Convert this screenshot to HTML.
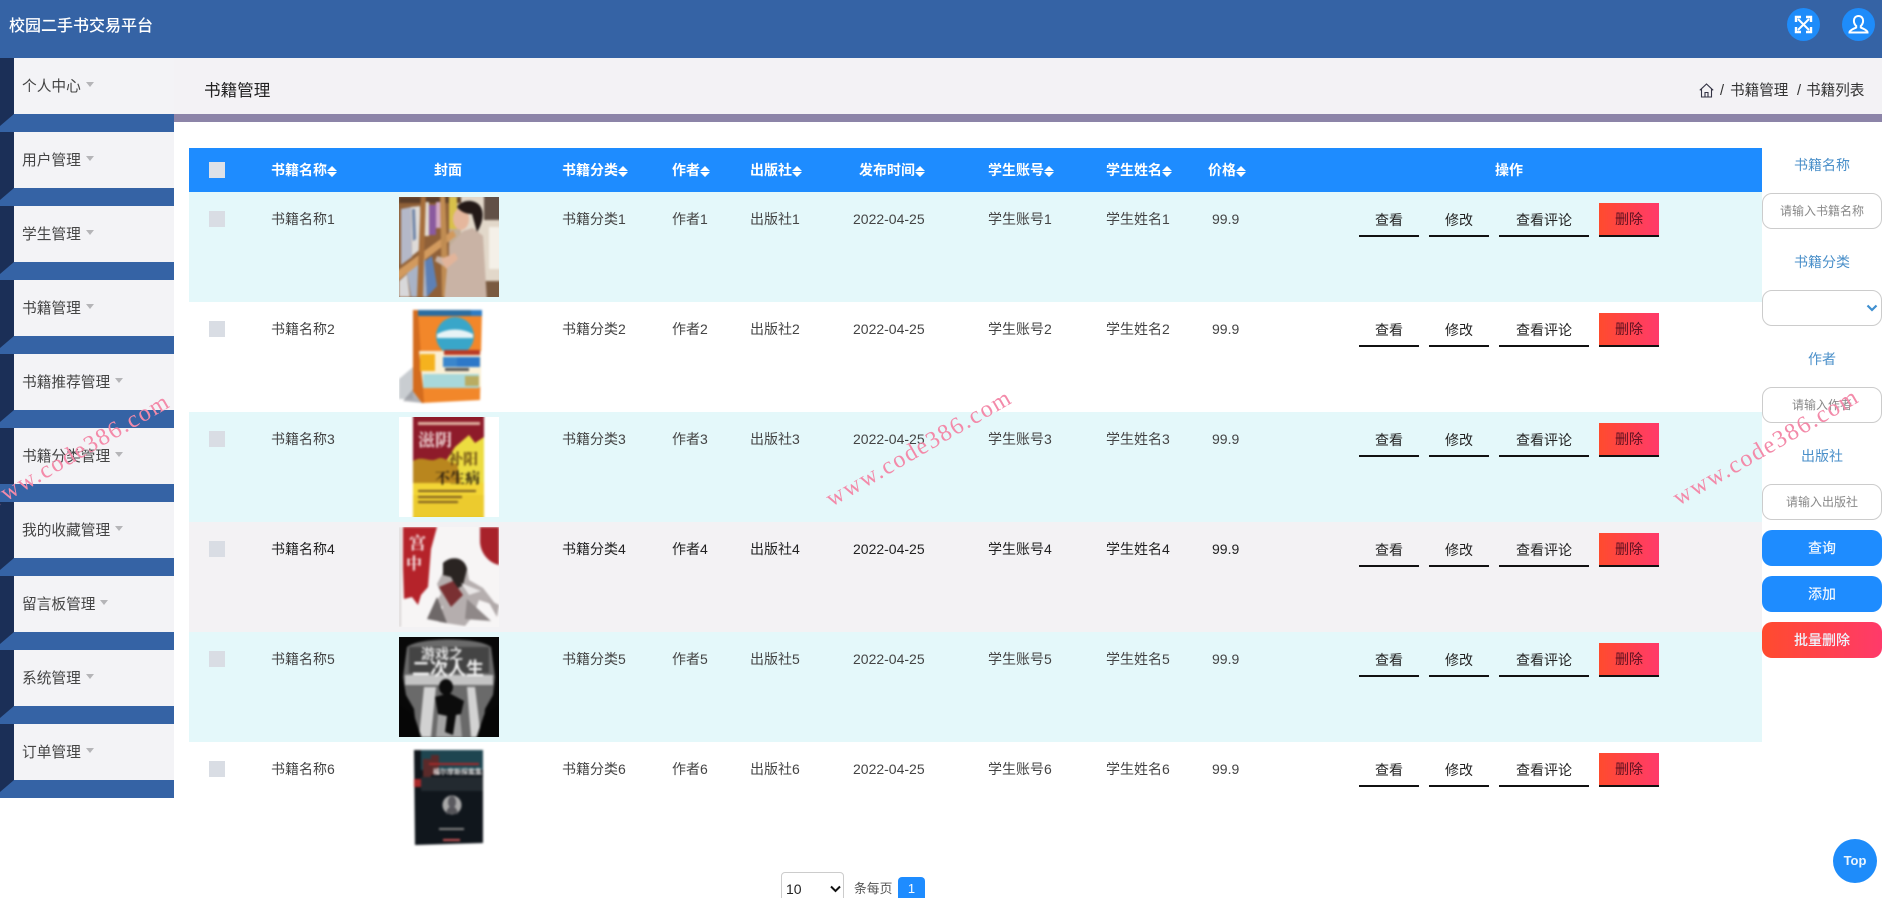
<!DOCTYPE html>
<html lang="zh">
<head>
<meta charset="utf-8">
<title>校园二手书交易平台</title>
<style>
*{box-sizing:border-box;margin:0;padding:0}
html,body{width:1882px;height:898px;overflow:hidden;background:#fff}
body{position:relative;font-family:"Liberation Sans","Noto Sans CJK SC",sans-serif;font-size:14px;color:#333}
.a{position:absolute;white-space:nowrap}
.hd{left:0;top:0;width:1882px;height:58px;background:#3563a5}
.ttl{left:9px;top:14px;font-size:16px;line-height:26px;color:#fff;font-weight:500}
.circ{width:33px;height:33px;border-radius:50%;background:#1e8cfa;top:8px}
.circ svg{position:absolute;left:0;top:0}
.it{left:0;width:174px;height:74px}
.it .g{position:absolute;left:14px;top:0;width:160px;height:56px;background:#f3f3f6}
.it .d{position:absolute;left:0;top:0;width:14px;height:56px;background:#1b2f57}
.it .b{position:absolute;left:0;top:56px;width:174px;height:18px;background:#3563a5}
.it .tr{position:absolute;left:0;top:56px;width:14px;height:12px;background:#1b2f57;clip-path:polygon(0 0,100% 0,0 100%)}
.it span{position:absolute;left:22px;top:17px;font-size:14.7px;line-height:24px;color:#444;white-space:nowrap}
.it span:after{content:"";display:inline-block;margin-left:5px;vertical-align:4px;border:4px solid transparent;border-top:5px solid #b5b5b8;border-bottom:0}
.bar{left:174px;top:58px;width:1708px;height:56px;background:#f3f2f5}
.pur{left:174px;top:114px;width:1708px;height:8px;background:#8c84a8}
.pt{left:204px;top:79px;font-size:16.6px;line-height:24px;color:#222}
.bc{top:79px;font-size:14.6px;line-height:24px;color:#333}
.thd{left:189px;top:148px;width:1573px;height:44px;background:#1e8cff}
.th{top:159px;line-height:22px;color:#fff;font-weight:700;font-size:14px}
.th i{display:inline-block;position:relative;width:10px;height:10px;vertical-align:-1px}
.th i:before,.th i:after{content:"";position:absolute;left:0;border:5px solid transparent}
.th i:before{top:0;border-bottom:5px solid #fff;border-top:0}
.th i:after{top:6px;border-top:5px solid #fff;border-bottom:0}
.cb{left:209px;width:16px;height:16px;background:#d9dde4}
.r{left:189px;width:1573px;height:110px}
.cell{line-height:22px;color:#444;font-size:14px}
.btn{height:34px;line-height:34px;text-align:center;border-bottom:2px solid #111;color:#222;font-size:14px}
.del{background:linear-gradient(90deg,#ff4b2e,#ff3a6a);color:#5c1020;line-height:32px}
.lb{left:1762px;width:120px;text-align:center;color:#4a8fc9;font-size:14px;line-height:22px}
.ip{left:1762px;width:120px;height:36px;border:1px solid #ccc;border-radius:10px;background:#fff;text-align:center;line-height:34px;color:#888;font-size:12px}
.bb{left:1762px;width:120px;height:36px;border-radius:10px;background:#1e8cff;color:#eef6ff;text-align:center;line-height:36px;font-weight:500;font-size:14px}
.wm{font-family:"Liberation Serif",serif;color:#f38aa9;font-size:24px;letter-spacing:1.7px;line-height:26px;transform:rotate(-30deg);transform-origin:0 50%;z-index:9}
svg.cv{position:absolute;width:100px;height:100px;left:399px;overflow:hidden}
svg.cv g.bl{filter:blur(1.1px)}
</style>
</head>
<body>
<div class="a hd"></div>
<div class="a ttl">校园二手书交易平台</div>
<div class="a circ" style="left:1787px"><svg width="33" height="33" viewBox="0 0 33 33" fill="none" stroke="#fff" stroke-width="2"><path d="M11 11l11 11M22 11L11 22"/><path d="M9 14V9h5M19 9h5v5M24 19v5h-5M14 24H9v-5" stroke-width="2.400"/></svg></div>
<div class="a circ" style="left:1842px"><svg width="33" height="33" viewBox="0 0 33 33" fill="none" stroke="#fff" stroke-width="2"><path d="M16.500 8c-3 0-4.600 2.200-4.600 4.800 0 2.400 1 4 2.300 5.200v1.500c-2 1.200-5.500 2-6.700 4.500v.5h18v-.5c-1.200-2.500-4.700-3.300-6.700-4.500V18c1.300-1.200 2.300-2.800 2.300-5.200C21.100 10.200 19.500 8 16.500 8z"/></svg></div>

<div class="a it" style="top:58px"><div class="d"></div><div class="g"></div><div class="b"></div><div class="tr"></div><span>个人中心</span></div>
<div class="a it" style="top:132px"><div class="d"></div><div class="g"></div><div class="b"></div><div class="tr"></div><span>用户管理</span></div>
<div class="a it" style="top:206px"><div class="d"></div><div class="g"></div><div class="b"></div><div class="tr"></div><span>学生管理</span></div>
<div class="a it" style="top:280px"><div class="d"></div><div class="g"></div><div class="b"></div><div class="tr"></div><span>书籍管理</span></div>
<div class="a it" style="top:354px"><div class="d"></div><div class="g"></div><div class="b"></div><div class="tr"></div><span>书籍推荐管理</span></div>
<div class="a it" style="top:428px"><div class="d"></div><div class="g"></div><div class="b"></div><span>书籍分类管理</span></div>
<div class="a it" style="top:502px"><div class="d"></div><div class="g"></div><div class="b"></div><div class="tr"></div><span>我的收藏管理</span></div>
<div class="a it" style="top:576px"><div class="d"></div><div class="g"></div><div class="b"></div><div class="tr"></div><span>留言板管理</span></div>
<div class="a it" style="top:650px"><div class="d"></div><div class="g"></div><div class="b"></div><div class="tr"></div><span>系统管理</span></div>
<div class="a it" style="top:724px"><div class="d"></div><div class="g"></div><div class="b"></div><div class="tr"></div><span>订单管理</span></div>

<div class="a bar"></div>
<div class="a pur"></div>
<div class="a pt">书籍管理</div>
<svg class="a" style="left:1699px;top:83px" width="15" height="15" viewBox="0 0 15 15" fill="none" stroke="#334" stroke-width="1.100"><path d="M.8 7.300L7.500 1l6.700 6.300M2.500 6v8h10V6M6 14V9.500h3V14"/></svg>
<div class="a bc" style="left:1720px">/</div>
<div class="a bc" style="left:1730px">书籍管理</div>
<div class="a bc" style="left:1797px">/</div>
<div class="a bc" style="left:1806px">书籍列表</div>

<div class="a thd"></div>
<div class="a cb" style="top:162px;background:#dde1e8"></div>
<div class="a th" style="left:271px">书籍名称<i></i></div>
<div class="a th" style="left:434px">封面</div>
<div class="a th" style="left:562px">书籍分类<i></i></div>
<div class="a th" style="left:672px">作者<i></i></div>
<div class="a th" style="left:750px">出版社<i></i></div>
<div class="a th" style="left:859px">发布时间<i></i></div>
<div class="a th" style="left:988px">学生账号<i></i></div>
<div class="a th" style="left:1106px">学生姓名<i></i></div>
<div class="a th" style="left:1208px">价格<i></i></div>
<div class="a th" style="left:1495px">操作</div>

<div class="a r" style="top:192px;background:#e4f8fa"></div>
<div class="a r" style="top:302px;background:#fff"></div>
<div class="a r" style="top:412px;background:#e4f8fa"></div>
<div class="a r" style="top:522px;background:#f3f2f4"></div>
<div class="a r" style="top:632px;background:#e4f8fa"></div>
<div class="a r" style="top:742px;background:#fff"></div>

<!-- row 1 -->
<div class="a cb" style="top:211px"></div>
<div class="a cell" style="left:271px;top:208px">书籍名称1</div>
<svg class="cv" style="top:197px" viewBox="0 0 100 100"><g class="bl">
<rect x="-5" y="-5" width="110" height="110" fill="#c2ae98"/>
<rect x="-5" y="-5" width="55" height="110" fill="#8f6038"/>
<rect x="0" y="0" width="100" height="6" fill="#5a3d28"/>
<path d="M2 12l10-2 1 50-11 8z" fill="#b4b8c8"/><path d="M12 10l9-1 2 42-10 8z" fill="#dedbd8"/><path d="M13 12l3 0 1 30-3 2z" fill="#6f85a8"/>
<rect x="30" y="8" width="7" height="30" fill="#8a5a9e"/><rect x="37" y="5" width="6" height="26" fill="#d2a9c4"/><rect x="25" y="5" width="5" height="34" fill="#e2dcd2"/>
<path d="M8 76l18-15 2 39H12z" fill="#a9b3c6"/><path d="M26 64l7-5 5 30-10 11z" fill="#5d80b5"/><path d="M0 84l8-7 3 23H0z" fill="#d8d8da"/>
<path d="M-2 74L54 33l3 6L-2 84z" fill="#d29a5e"/><path d="M22-5h5l-3 105h-6z" fill="#a66e3b"/><path d="M41-5h5l4 105h-7z" fill="#c08c52"/>
<rect x="62" y="-5" width="43" height="110" fill="#e2d8ca"/><rect x="85" y="-5" width="20" height="28" fill="#615046"/><rect x="90" y="30" width="15" height="42" fill="#f4f0e8"/>
<rect x="50" y="0" width="8" height="32" fill="#d9c04a"/><rect x="80" y="84" width="25" height="21" fill="#7a5a40"/>
<path d="M50 50l14-16 10-3 10 8 4 66H45l3-34-12-7 2-5 12 3z" fill="#c9b3a5"/>
<path d="M42 62l14-6 3 6-12 10z" fill="#e2b49a"/>
<ellipse cx="62" cy="22" rx="8" ry="11" fill="#e5b79d"/><path d="M58 10c6-9 22-8 25 3 2 7-1 16-5 22l-5-18c-7 0-12-3-15-7z" fill="#231917"/>
</g></svg>
<div class="a cell" style="left:562px;top:208px">书籍分类1</div>
<div class="a cell" style="left:672px;top:208px">作者1</div>
<div class="a cell" style="left:750px;top:208px">出版社1</div>
<div class="a cell" style="left:853px;top:208px">2022-04-25</div>
<div class="a cell" style="left:988px;top:208px">学生账号1</div>
<div class="a cell" style="left:1106px;top:208px">学生姓名1</div>
<div class="a cell" style="left:1212px;top:208px">99.9</div>
<div class="a btn" style="left:1359px;top:203px;width:60px">查看</div>
<div class="a btn" style="left:1429px;top:203px;width:60px">修改</div>
<div class="a btn" style="left:1499px;top:203px;width:90px">查看评论</div>
<div class="a btn del" style="left:1599px;top:203px;width:60px">删除</div>

<!-- row 2 -->
<div class="a cb" style="top:321px"></div>
<div class="a cell" style="left:271px;top:318px">书籍名称2</div>
<svg class="cv" style="top:307px" viewBox="0 0 100 100"><g class="bl">
<rect x="-5" y="-5" width="110" height="110" fill="#fff"/>
<path d="M0 92V72l14-12v32z" fill="#bcc0c6" opacity=".8"/><path d="M4 94l12-14 8 16z" fill="#8e9299" opacity=".7"/>
<path d="M14 3l69 2-2 88-58 3-9-12z" fill="#f2872a"/>
<path d="M14 3h5l6 93h-2l-9-12z" fill="#d46c1e"/><rect x="19" y="3" width="64" height="6" fill="#2a6da0"/><rect x="72" y="3" width="11" height="6" fill="#2f7cc4"/>
<circle cx="56" cy="29" r="19" fill="#39a6c9"/><path d="M38 27c12-6 24-6 36 0v4H38z" fill="#e7f3f6"/>
<path d="M20 44h62v36H24z" fill="#fbf0d5"/><rect x="45" y="43" width="36" height="5" fill="#b83a26"/><rect x="58" y="50" width="23" height="10" fill="#2d78c8"/><rect x="44" y="50" width="14" height="10" fill="#3a86cc"/><rect x="21" y="47" width="15" height="17" fill="#f5b21e"/>
<rect x="24" y="67" width="56" height="14" fill="#a8d8da"/><rect x="66" y="69" width="14" height="10" fill="#b9ac62"/><rect x="46" y="61" width="24" height="3" fill="#555"/>
</g></svg>
<div class="a cell" style="left:562px;top:318px">书籍分类2</div>
<div class="a cell" style="left:672px;top:318px">作者2</div>
<div class="a cell" style="left:750px;top:318px">出版社2</div>
<div class="a cell" style="left:853px;top:318px">2022-04-25</div>
<div class="a cell" style="left:988px;top:318px">学生账号2</div>
<div class="a cell" style="left:1106px;top:318px">学生姓名2</div>
<div class="a cell" style="left:1212px;top:318px">99.9</div>
<div class="a btn" style="left:1359px;top:313px;width:60px">查看</div>
<div class="a btn" style="left:1429px;top:313px;width:60px">修改</div>
<div class="a btn" style="left:1499px;top:313px;width:90px">查看评论</div>
<div class="a btn del" style="left:1599px;top:313px;width:60px">删除</div>

<!-- row 3 -->
<div class="a cb" style="top:431px"></div>
<div class="a cell" style="left:271px;top:428px">书籍名称3</div>
<svg class="cv" style="top:417px" viewBox="0 0 100 100"><g class="bl">
<rect x="-5" y="-5" width="110" height="110" fill="#fff"/>
<rect x="14" y="-5" width="71" height="110" fill="#e9c422"/>
<rect x="14" y="-5" width="71" height="55" fill="#8e1b2a"/>
<path d="M42 52l14-22 14-12 6 8 9-6v50H42z" fill="#ecdc40"/>
<path d="M14 44c10-6 16 2 24-2s12 6 20 4l4 20H14z" fill="#b9861e"/>
<path d="M14 66h71v12H14z" fill="#f3d535"/><path d="M14 78h71v22H14z" fill="#eccb2e"/>
<rect x="19" y="5" width="62" height="3" fill="#e0b0a0"/>
<text x="19" y="29" font-size="17" font-weight="700" fill="#f4dede" font-family="'Noto Serif CJK SC',serif">滋阴</text>
<text x="49" y="47" font-size="15" font-weight="700" fill="#6a4a14" font-family="'Noto Serif CJK SC',serif">补阳</text>
<text x="36" y="66" font-size="15" font-weight="700" fill="#2a1d10" font-family="'Noto Serif CJK SC',serif">不生病</text>
<rect x="19" y="73" width="58" height="2" fill="#7a5a20"/><rect x="19" y="79" width="44" height="2" fill="#7a5a20"/><rect x="19" y="84" width="40" height="2" fill="#7a5a20"/>
</g></svg>
<div class="a cell" style="left:562px;top:428px">书籍分类3</div>
<div class="a cell" style="left:672px;top:428px">作者3</div>
<div class="a cell" style="left:750px;top:428px">出版社3</div>
<div class="a cell" style="left:853px;top:428px">2022-04-25</div>
<div class="a cell" style="left:988px;top:428px">学生账号3</div>
<div class="a cell" style="left:1106px;top:428px">学生姓名3</div>
<div class="a cell" style="left:1212px;top:428px">99.9</div>
<div class="a btn" style="left:1359px;top:423px;width:60px">查看</div>
<div class="a btn" style="left:1429px;top:423px;width:60px">修改</div>
<div class="a btn" style="left:1499px;top:423px;width:90px">查看评论</div>
<div class="a btn del" style="left:1599px;top:423px;width:60px">删除</div>

<!-- row 4 -->
<div class="a cb" style="top:541px"></div>
<div class="a cell" style="left:271px;top:538px;color:#222">书籍名称4</div>
<svg class="cv" style="top:527px" viewBox="0 0 100 100"><g class="bl">
<rect x="-5" y="-5" width="110" height="110" fill="#f7f5f5"/>
<rect x="0" y="0" width="2" height="100" fill="#d8d4d4"/>
<path d="M4 0h34l-6 22-3 38-7 8-3 10-6-8-8 2-1-30z" fill="#b5232a"/>
<path d="M81 0h19v38c-10-2-19-12-19-24z" fill="#a8222a"/>
<path d="M46 42c6-10 18-8 22-1l2 12 14 8 14 18-18-6-6 16-8 10-26-4 4-16-12 4 10-16-4-10z" fill="#b5aeae"/>
<path d="M44 36c8-8 22-6 24 6l-4 16-6 4-6-12-8-2z" fill="#2a2422"/>
<path d="M40 60l14-6 10 14-12 12z" fill="#7a3032"/><path d="M28 92l10-22 10 26z" fill="#6e6868"/><path d="M68 72l24 22-26-2z" fill="#8f8888"/><path d="M62 56l20 8-12 4z" fill="#e9e6e6"/>
<path d="M88 72l12 6-2 12z" fill="#b0a9a9"/>
<text x="10" y="22" font-size="17" font-weight="700" fill="#f8eaea" font-family="'Noto Serif CJK SC',serif">宫</text>
<text x="7" y="42" font-size="16" font-weight="700" fill="#f8eaea" font-family="'Noto Serif CJK SC',serif">中</text>
</g></svg>
<div class="a cell" style="left:562px;top:538px;color:#222">书籍分类4</div>
<div class="a cell" style="left:672px;top:538px;color:#222">作者4</div>
<div class="a cell" style="left:750px;top:538px;color:#222">出版社4</div>
<div class="a cell" style="left:853px;top:538px;color:#222">2022-04-25</div>
<div class="a cell" style="left:988px;top:538px;color:#222">学生账号4</div>
<div class="a cell" style="left:1106px;top:538px;color:#222">学生姓名4</div>
<div class="a cell" style="left:1212px;top:538px;color:#222">99.9</div>
<div class="a btn" style="left:1359px;top:533px;width:60px">查看</div>
<div class="a btn" style="left:1429px;top:533px;width:60px">修改</div>
<div class="a btn" style="left:1499px;top:533px;width:90px">查看评论</div>
<div class="a btn del" style="left:1599px;top:533px;width:60px">删除</div>

<!-- row 5 -->
<div class="a cb" style="top:651px"></div>
<div class="a cell" style="left:271px;top:648px">书籍名称5</div>
<svg class="cv" style="top:637px" viewBox="0 0 100 100"><g class="bl">
<rect x="-5" y="-5" width="110" height="110" fill="#080808"/>
<path d="M8 10C20 0 80 0 92 10l4 30-2 18-8 14-3 30H18l-3-30-8-14-3-18z" fill="#6a6a6a"/>
<path d="M10 10h80v26H10z" fill="#444"/><path d="M6 38h88v10H6z" fill="#c4c4c4"/>
<path d="M25 50l-5 50h12l5-50zM68 50l4 50h10l-6-50z" fill="#d2d2d2"/><path d="M40 68l-3 32h26l-3-32z" fill="#a4a4a4"/>
<path d="M0 68l15 10 8 24H-5zM100 68l-15 10-8 24h28z" fill="#060606"/>
<ellipse cx="47" cy="50" rx="7" ry="8" fill="#0c0c0c"/><path d="M36 60l14-4 15 8-3 13-5 1-3 20-8-3 2-16-9-2z" fill="#0c0c0c"/>
<text x="22" y="22" font-size="14" font-weight="700" fill="#e4e4e4" font-family="'Noto Sans CJK SC',sans-serif">游戏之</text>
<text x="13" y="38" font-size="18" font-weight="700" fill="#f2f2f2" font-family="'Noto Sans CJK SC',sans-serif">二次人生</text>
</g></svg>
<div class="a cell" style="left:562px;top:648px">书籍分类5</div>
<div class="a cell" style="left:672px;top:648px">作者5</div>
<div class="a cell" style="left:750px;top:648px">出版社5</div>
<div class="a cell" style="left:853px;top:648px">2022-04-25</div>
<div class="a cell" style="left:988px;top:648px">学生账号5</div>
<div class="a cell" style="left:1106px;top:648px">学生姓名5</div>
<div class="a cell" style="left:1212px;top:648px">99.9</div>
<div class="a btn" style="left:1359px;top:643px;width:60px">查看</div>
<div class="a btn" style="left:1429px;top:643px;width:60px">修改</div>
<div class="a btn" style="left:1499px;top:643px;width:90px">查看评论</div>
<div class="a btn del" style="left:1599px;top:643px;width:60px">删除</div>

<!-- row 6 -->
<div class="a cb" style="top:761px"></div>
<div class="a cell" style="left:271px;top:758px">书籍名称6</div>
<svg class="cv" style="top:747px" viewBox="0 0 100 100"><g class="bl">
<rect x="-5" y="-5" width="110" height="110" fill="#fff"/>
<path d="M15 3h69v93l-68 2z" fill="#10161c"/>
<path d="M22 3h62v20H22z" fill="#1e4550"/><path d="M22 30h62v14H22z" fill="#232a30"/><path d="M24 12h8v18h-8zM32 8h8v20h-8z" fill="#5a2a2a"/>
<rect x="15" y="32" width="7" height="8" fill="#a8282a"/>
<rect x="30" y="16" width="50" height="2" fill="#a82a2a"/>
<text x="34" y="27" font-size="7" font-weight="700" fill="#e4e4e4" font-family="'Noto Sans CJK SC',sans-serif">福尔摩斯探案集</text>
<circle cx="53" cy="58" r="9.500" fill="#a9a9a9"/><path d="M47 67c1-10 11-10 12 0z" fill="#55555a"/><ellipse cx="53" cy="55" rx="4" ry="6" fill="#5a5a5f"/>
<rect x="40" y="81" width="25" height="2" fill="#888"/><rect x="44" y="92" width="17" height="2" fill="#c55"/>
</g></svg>
<div class="a cell" style="left:562px;top:758px">书籍分类6</div>
<div class="a cell" style="left:672px;top:758px">作者6</div>
<div class="a cell" style="left:750px;top:758px">出版社6</div>
<div class="a cell" style="left:853px;top:758px">2022-04-25</div>
<div class="a cell" style="left:988px;top:758px">学生账号6</div>
<div class="a cell" style="left:1106px;top:758px">学生姓名6</div>
<div class="a cell" style="left:1212px;top:758px">99.9</div>
<div class="a btn" style="left:1359px;top:753px;width:60px">查看</div>
<div class="a btn" style="left:1429px;top:753px;width:60px">修改</div>
<div class="a btn" style="left:1499px;top:753px;width:90px">查看评论</div>
<div class="a btn del" style="left:1599px;top:753px;width:60px">删除</div>

<!-- search panel -->
<div class="a lb" style="top:154px">书籍名称</div>
<div class="a ip" style="top:193px">请输入书籍名称</div>
<div class="a lb" style="top:251px">书籍分类</div>
<div class="a ip" style="top:290px"></div>
<svg class="a" style="left:1866px;top:304px" width="12" height="8" viewBox="0 0 12 8" fill="none" stroke="#3f8fd0" stroke-width="2.200"><path d="M1.500 1.500L6 6l4.500-4.500"/></svg>
<div class="a lb" style="top:348px">作者</div>
<div class="a ip" style="top:387px">请输入作者</div>
<div class="a lb" style="top:445px">出版社</div>
<div class="a ip" style="top:484px">请输入出版社</div>
<div class="a bb" style="top:530px">查询</div>
<div class="a bb" style="top:576px">添加</div>
<div class="a bb" style="top:622px;background:linear-gradient(90deg,#ff4b2e,#ff3a6a)">批量删除</div>

<!-- pagination -->
<div class="a" style="left:781px;top:872px;width:63px;height:40px;border:1px solid #ccc;border-radius:4px;background:#fff"></div>
<div class="a" style="left:786px;top:878px;line-height:22px;font-size:14px;color:#222">10</div>
<svg class="a" style="left:830px;top:885px" width="11" height="8" viewBox="0 0 11 8" fill="none" stroke="#111" stroke-width="2"><path d="M1 1.500l4.500 4.500L10 1.500"/></svg>
<div class="a" style="left:854px;top:878px;line-height:22px;font-size:12.800px;color:#555">条每页</div>
<div class="a" style="left:898px;top:877px;width:27px;height:30px;background:#1e8cff;border-radius:4px;color:#fff;text-align:center;line-height:24px;font-size:13px">1</div>

<!-- top -->
<div class="a" style="left:1833px;top:839px;width:44px;height:44px;border-radius:50%;background:#1e8cfa;color:#eaf5ff;text-align:center;line-height:44px;font-weight:700;font-size:13px">Top</div>

<!-- watermarks -->
<div class="a wm" style="left:-14px;top:492px">www.code386.com</div>
<div class="a wm" style="left:828px;top:488px">www.code386.com</div>
<div class="a wm" style="left:1675px;top:487px">www.code386.com</div>
</body>
</html>
